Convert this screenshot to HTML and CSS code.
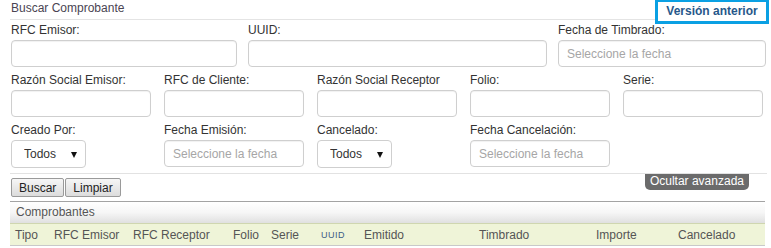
FILE: index.html
```html
<!DOCTYPE html>
<html lang="es">

<head>
  <meta charset="UTF-8">
  <meta name="viewport" content="width=device-width, initial-scale=1.0">
  <title>Buscar Comprobante</title>
  <link rel="stylesheet" href="styles.css">
</head>

<body>
  <div class="search_panel">
    <div class="search_head">
      <div class="search_title">Buscar Comprobante</div>
      <a class="old_version" href="#">Versión anterior</a>
    </div>

    <div class="row_top">
      <div class="field">
        <label>RFC Emisor:</label>
        <input type="text" class="txt">
      </div>
      <div class="field">
        <label>UUID:</label>
        <input type="text" class="txt">
      </div>
      <div class="field">
        <label>Fecha de Timbrado:</label>
        <input type="text" class="txt" placeholder="Seleccione la fecha">
      </div>
    </div>

    <div class="row_grid">
      <div class="field">
        <label>Razón Social Emisor:</label>
        <input type="text" class="txt">
      </div>
      <div class="field">
        <label>RFC de Cliente:</label>
        <input type="text" class="txt">
      </div>
      <div class="field">
        <label>Razón Social Receptor</label>
        <input type="text" class="txt">
      </div>
      <div class="field">
        <label>Folio:</label>
        <input type="text" class="txt">
      </div>
      <div class="field">
        <label>Serie:</label>
        <input type="text" class="txt">
      </div>

      <div class="field">
        <label>Creado Por:</label>
        <span class="sel"><select><option>Todos</option></select></span>
      </div>
      <div class="field">
        <label>Fecha Emisión:</label>
        <input type="text" class="txt" placeholder="Seleccione la fecha">
      </div>
      <div class="field">
        <label>Cancelado:</label>
        <span class="sel"><select><option>Todos</option></select></span>
      </div>
      <div class="field">
        <label>Fecha Cancelación:</label>
        <input type="text" class="txt" placeholder="Seleccione la fecha">
      </div>
    </div>

    <div class="actions">
      <button class="btn">Buscar</button><button class="btn">Limpiar</button>
      <span class="toggle_adv">Ocultar avanzada</span>
    </div>
  </div>

  <div class="results">
    <div class="results_title">Comprobantes</div>
    <div class="results_cols">
      <span>Tipo</span>
      <span>RFC Emisor</span>
      <span>RFC Receptor</span>
      <span>Folio</span>
      <span>Serie</span>
      <span class="uuid">UUID</span>
      <span>Emitido</span>
      <span>Timbrado</span>
      <span>Importe</span>
      <span>Cancelado</span>
    </div>
  </div>
</body>

</html>
```

FILE: styles.css
```css
* {
  box-sizing: border-box;
}

body {
  font-family: "Liberation Sans", Arial, sans-serif;
  font-size: 12px;
  color: #333;
  background-color: #fff;
  margin: 0;
}

.search_panel {
  padding-left: 10px;
  width: 768px;
}

.search_head {
  display: flex;
  align-items: flex-start;
  height: 20px;
}

.search_title {
  flex: 1;
  height: 20px;
  line-height: 17px;
  padding-left: 1px;
  color: #4a4452;
  border-bottom: 1px solid #e4e4e4;
}

.old_version {
  display: block;
  width: 114px;
  height: 25px;
  margin-top: -1px;
  margin-right: -1px;
  border: 3px solid #0aa0e3;
  color: #27578a;
  font-weight: bold;
  font-size: 12px;
  line-height: 18px;
  text-align: center;
  text-decoration: none;
  background-color: #fff;
  position: relative;
  z-index: 1;
}

.field label {
  display: block;
  height: 20px;
  line-height: 20px;
  color: #333;
}

.row_top {
  display: grid;
  grid-template-columns: 226px 299px 208px;
  column-gap: 11px;
  padding-left: 1px;
  margin-bottom: 3px;
}

.row_grid {
  display: grid;
  grid-template-columns: repeat(5, 140px);
  column-gap: 13px;
  row-gap: 3px;
  padding-left: 1px;
}

.txt {
  display: block;
  width: 100%;
  height: 27px;
  margin: 0;
  padding: 0 8px;
  font-family: "Liberation Sans", Arial, sans-serif;
  font-size: 12px;
  color: #333;
  border: 1px solid #cfcfcf;
  border-radius: 4px;
  box-shadow: inset 0 1px 1px rgba(0, 0, 0, .06);
  outline: none;
}

.txt::placeholder {
  color: #a6a6a6;
}

.sel {
  display: inline-block;
  position: relative;
  width: 75px;
  height: 28px;
}

.sel select {
  width: 100%;
  height: 28px;
  padding: 0 0 0 12px;
  font-family: "Liberation Sans", Arial, sans-serif;
  font-size: 12px;
  color: #333;
  background-color: #fff;
  border: 1px solid #cfcfcf;
  border-radius: 4px;
  -webkit-appearance: none;
  appearance: none;
  outline: none;
}

.sel::after {
  content: "";
  position: absolute;
  right: 9px;
  top: 12px;
  border-left: 3px solid transparent;
  border-right: 3px solid transparent;
  border-top: 6px solid #111;
  pointer-events: none;
}

.actions {
  display: flex;
  align-items: flex-start;
  height: 28px;
  margin-top: 5px;
  margin-right: 1px;
  border-top: 1px solid #e2e2e2;
}

.btn {
  height: 19px;
  margin-top: 4px;
  margin-left: 1px;
  padding: 0 7px;
  font-family: "Liberation Sans", Arial, sans-serif;
  font-size: 12px;
  color: #222;
  border: 1px solid #9a9a9a;
  border-radius: 2px;
  background: linear-gradient(#f6f6f6, #dcdcdc);
}

.btn + .btn {
  margin-left: 1px;
}

.toggle_adv {
  margin-left: auto;
  margin-right: 18px;
  height: 16px;
  padding: 0 5px;
  line-height: 15px;
  color: #fff;
  background-color: #6b6b6b;
  border-radius: 0 0 5px 5px;
}

.results {
  margin-left: 10px;
  width: 755px;
  border-top: 1px solid #a3a3a3;
}

.results_title {
  height: 21px;
  line-height: 21px;
  padding-left: 6px;
  color: #555;
  background: linear-gradient(#ffffff, #f6f6f6 50%, #e0e0e0);
}

.results_cols {
  display: grid;
  grid-template-columns: 39px 79px 100px 38px 50px 43px 115px 117px 82px 1fr;
  height: 23px;
  line-height: 22px;
  padding-left: 5px;
  color: #555;
  background-color: #eff4d8;
  border-top: 1px solid #cfd6b0;
  border-bottom: 1px solid #c9c9c9;
}

.results_cols .uuid {
  font-size: 9px;
  letter-spacing: .5px;
  color: #3d5c86;
}
```
